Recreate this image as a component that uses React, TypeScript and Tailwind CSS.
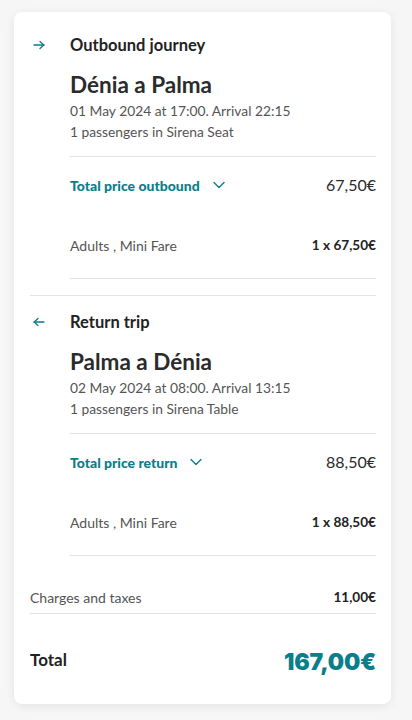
const teal = "text-[#0a7e8a]";

function Arrow({ dir }: { dir: "right" | "left" }) {
  return (
    <svg width="12" height="10" viewBox="0 0 12 10" fill="none" stroke="#0a7e8a" strokeWidth="1.3" strokeLinecap="round" strokeLinejoin="round">
      {dir === "right" ? (
        <>
          <path d="M1 5h10" />
          <path d="M7 1.5L10.8 5 7 8.5" />
        </>
      ) : (
        <>
          <path d="M11 5H1" />
          <path d="M5 1.5L1.2 5 5 8.5" />
        </>
      )}
    </svg>
  );
}

function Chevron() {
  return (
    <svg width="12" height="8" viewBox="0 0 12 8" fill="none" stroke="#0a7e8a" strokeWidth="1.4" strokeLinecap="round" strokeLinejoin="round">
      <path d="M1 1.5l5 5 5-5" />
    </svg>
  );
}

function Journey(props: {
  dir: "right" | "left";
  label: string;
  route: string;
  date: string;
  pax: string;
  priceLabel: string;
  price: string;
  unit: string;
}) {
  return (
    <div className="flex">
      <div className="w-[40px] flex h-[24px] items-center pl-[3px]">
        <Arrow dir={props.dir} />
      </div>
      <div className="flex-1">
        <div className="h-[24px] leading-[24px] text-[16.5px] font-bold text-[#222]">{props.label}</div>
        <div className="mt-[14px] h-[28px] leading-[28px] text-[22.5px] font-bold text-[#2b2b2b]">{props.route}</div>
        <div className="mt-[2px] leading-[20px] text-[13.8px] text-[#555]">{props.date}</div>
        <div className="leading-[22px] text-[13.8px] text-[#555]">{props.pax}</div>
        <div className="mt-[13px] border-t border-[#e3e3e3]" />
        <div className="mt-[16px] flex items-center justify-between h-[24px]">
          <div className="flex items-center gap-[13px]">
            <span className={`text-[14px] font-black ${teal}`}>{props.priceLabel}</span>
            <Chevron />
          </div>
          <span className="text-[16px] text-[#2b2b2b]">{props.price}</span>
        </div>
        <div className="mt-[38px] flex items-center justify-between h-[20px]">
          <span className="text-[14px] text-[#555]">Adults , Mini Fare</span>
          <span className="text-[13.6px] font-bold text-[#222]">{props.unit}</span>
        </div>
        <div className="mt-[23px] border-t border-[#e3e3e3]" />
      </div>
    </div>
  );
}

export default function App() {
  return (
    <div className="min-h-[720px] bg-[#f6f6f6] pt-[12px] px-[14px] pb-[15px] font-['Lato','Noto_Sans',sans-serif]">
      <div className="w-[377px] rounded-[8px] bg-white shadow-[0_2px_10px_rgba(0,0,0,0.08)] pl-[16px] pr-[15px] pt-[21px] pb-[24px]">
        <Journey
          dir="right"
          label="Outbound journey"
          route="Dénia a Palma"
          date="01 May 2024 at 17:00. Arrival 22:15"
          pax="1 passengers in Sirena Seat"
          priceLabel="Total price outbound"
          price="67,50€"
          unit="1 x 67,50€"
        />
        <div className="mt-[16px] border-t border-[#e3e3e3]" />
        <div className="pt-[14px]">
          <Journey
            dir="left"
            label="Return trip"
            route="Palma a Dénia"
            date="02 May 2024 at 08:00. Arrival 13:15"
            pax="1 passengers in Sirena Table"
            priceLabel="Total price return"
            price="88,50€"
            unit="1 x 88,50€"
          />
        </div>
        <div className="mt-[31px] flex items-center justify-between h-[20px]">
          <span className="text-[14px] text-[#555]">Charges and taxes</span>
          <span className="text-[13.6px] font-bold text-[#222]">11,00€</span>
        </div>
        <div className="mt-[6px] border-t border-[#e3e3e3]" />
        <div className="mt-[31px] flex items-center justify-between">
          <span className="text-[17px] font-bold text-[#222] -mt-[6px]">Total</span>
          <span className={`text-[23px] font-black tracking-[-0.2px] ${teal} font-['Inter',sans-serif]`}>167,00€</span>
        </div>
      </div>
    </div>
  );
}
